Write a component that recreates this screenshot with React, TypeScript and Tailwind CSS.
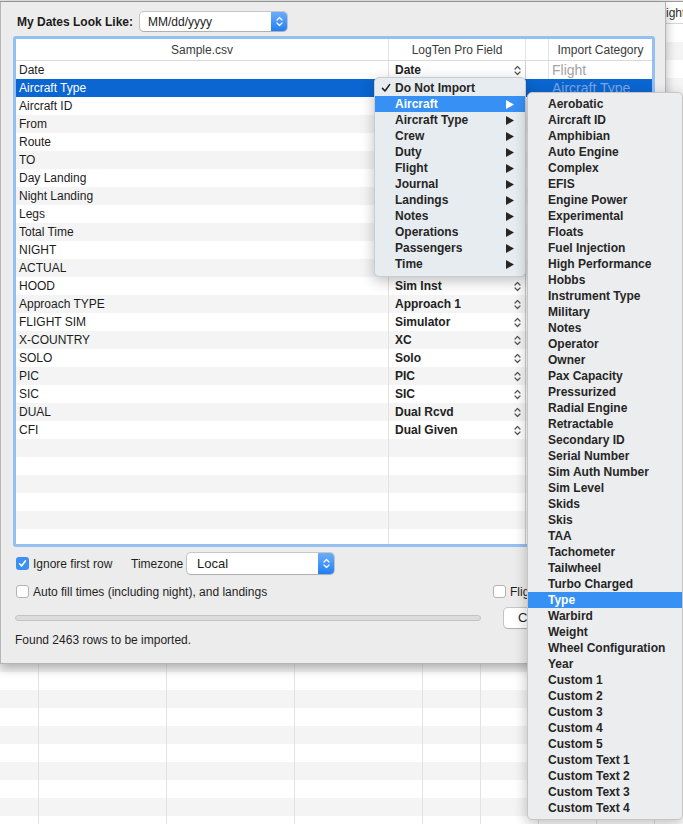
import React from "react";
import clsx from "clsx";

const cn = clsx;

const sourceRows = [
  "Date", "Aircraft Type", "Aircraft ID", "From", "Route", "TO", "Day Landing", "Night Landing", "Legs",
  "Total Time", "NIGHT", "ACTUAL", "HOOD", "Approach TYPE", "FLIGHT SIM", "X-COUNTRY", "SOLO", "PIC", "SIC",
  "DUAL", "CFI",
];

// rows 1-11 sit under the open popup menu, so only the visible values are filled in
const fields = [
  "Date", "", "", "", "", "", "", "", "", "", "", "", "Sim Inst", "Approach 1", "Simulator", "XC", "Solo", "PIC",
  "SIC", "Dual Rcvd", "Dual Given",
];

const categories = ["Flight", "Aircraft Type"];

const menuItems = [
  "Aircraft", "Aircraft Type", "Crew", "Duty", "Flight", "Journal", "Landings", "Notes", "Operations", "Passengers", "Time",
];

const subItems = [
  "Aerobatic", "Aircraft ID", "Amphibian", "Auto Engine", "Complex", "EFIS", "Engine Power", "Experimental", "Floats",
  "Fuel Injection", "High Performance", "Hobbs", "Instrument Type", "Military", "Notes", "Operator", "Owner",
  "Pax Capacity", "Pressurized", "Radial Engine", "Retractable", "Secondary ID", "Serial Number", "Sim Auth Number",
  "Sim Level", "Skids", "Skis", "TAA", "Tachometer", "Tailwheel", "Turbo Charged", "Type", "Warbird", "Weight",
  "Wheel Configuration", "Year", "Custom 1", "Custom 2", "Custom 3", "Custom 4", "Custom 5", "Custom Text 1",
  "Custom Text 2", "Custom Text 3", "Custom Text 4",
];

const UpDown = ({ className }: { className?: string }) => (
  <svg width="7" height="11" viewBox="0 0 7 11" className={className} fill="none" stroke="currentColor" strokeWidth="1.2" strokeLinecap="round" strokeLinejoin="round">
    <path d="M1 4 L3.5 1.5 L6 4" />
    <path d="M1 7 L3.5 9.5 L6 7" />
  </svg>
);

const Arrow = () => (
  <svg width="8" height="9" viewBox="0 0 8 9">
    <polygon points="0,0 8,4.5 0,9" fill="currentColor" />
  </svg>
);

const Checkbox = ({ checked }: { checked?: boolean }) =>
  checked ? (
    <span className="flex h-[13px] w-[13px] shrink-0 items-center justify-center rounded-[3px] bg-[#3b8ff6]">
      <svg width="9" height="9" viewBox="0 0 9 9">
        <path d="M1.6 4.8 L3.6 6.9 L7.4 1.9" stroke="white" strokeWidth="1.6" fill="none" strokeLinecap="round" strokeLinejoin="round" />
      </svg>
    </span>
  ) : (
    <span className="h-[13px] w-[13px] shrink-0 rounded-[3px] border border-[#b3b3b3] bg-white" />
  );

const Popup = ({ value, className, textClass }: { value: string; className?: string; textClass?: string }) => (
  <div className={cn("flex items-stretch rounded-[4px] bg-white shadow-[0_0_0_1px_rgba(0,0,0,0.16),0_1px_1px_rgba(0,0,0,0.12)]", className)}>
    <span className={cn("flex flex-1 items-center text-[#1d1d1d]", textClass)}>{value}</span>
    <span className="flex w-[16px] items-center justify-center rounded-r-[4px] bg-linear-to-b from-[#6aaefa] to-[#1f7ef4] text-white">
      <UpDown />
    </span>
  </div>
);

const App = () => {
  const bgRows = Array.from({ length: 45 });
  const emptyRows = Array.from({ length: 6 });

  return (
    <div className="relative h-[824px] w-[683px] overflow-hidden bg-white font-['Liberation_Sans',Arial,sans-serif] text-[12px]">
      {/* window behind the sheet */}
      <div className="h-[1px] bg-[#e4e4e4]" />
      <div className="h-[1px] bg-[#9c9c9c]" />
      <div className="grid h-[22px] grid-cols-[39px_128px_128px_128px_58px_58px_58px_58px_80px] border-b border-[#d6d6d6] bg-white">
        {["", "", "", "", "", "", "", "", "Flight"].map((h, i) => (
          <div key={i} className="flex items-center border-r border-[#e2e2e2] pl-[1px] text-[#333]">
            {h}
          </div>
        ))}
      </div>
      {bgRows.map((_, r) => (
        <div
          key={r}
          className={cn(
            "grid h-[18px] grid-cols-[39px_128px_128px_128px_58px_58px_58px_58px_80px]",
            r % 2 === 1 ? "bg-[#f4f4f4]" : "bg-white"
          )}
        >
          {Array.from({ length: 9 }).map((_, c) => (
            <div key={c} className="border-r border-[#e2e2e2]" />
          ))}
        </div>
      ))}

      {/* import sheet */}
      <div className="absolute left-0 top-[2px] flex h-[662px] w-[666px] flex-col border-x border-b border-[#b5b5b5] bg-[#ececec] shadow-[0_4px_10px_rgba(0,0,0,0.3)]">
        <div className="mt-[10px] flex h-[19px] items-center pl-[16px]">
          <span className="w-[123px] font-bold text-[#1b1b1b]">My Dates Look Like:</span>
          <Popup value="MM/dd/yyyy" className="h-[19px] w-[147px]" textClass="pl-[8px]" />
        </div>

        <div className="ml-[12px] mt-[5px] h-[511px] w-[642px] overflow-hidden rounded-[3px] border-[3px] border-[#93bff1] bg-white">
          <div className="grid h-[22px] grid-cols-[373px_137px_23px_103px] border-b border-[#dadada] text-[#3a3a3a]">
            <div className="flex items-center justify-center border-r border-[#e3e3e3]">Sample.csv</div>
            <div className="flex items-center justify-center border-r border-[#e3e3e3]">LogTen Pro Field</div>
            <div className="border-r border-[#e3e3e3]" />
            <div className="flex items-center justify-center">Import Category</div>
          </div>
          <div className="h-[483px] overflow-hidden">
            {sourceRows.map((name, r) => {
              const selected = r === 1;
              return (
                <div
                  key={name}
                  className={cn(
                    "grid h-[18px] grid-cols-[373px_137px_23px_103px] leading-[17px]",
                    selected ? "bg-[#0b66d1]" : r % 2 === 1 ? "bg-[#f4f4f4]" : "bg-white"
                  )}
                >
                  <div className={cn("flex items-center border-r pl-[3px]", selected ? "border-[#0b66d1] text-white" : "border-[#e3e3e3] text-[#1c1c1c]")}>
                    {name}
                  </div>
                  <div className={cn("flex items-center border-r pl-[6px] pr-[4px] font-bold", selected ? "border-[#0b66d1] text-white" : "border-[#d0d0d0] text-[#222]")}>
                    <span className="flex-1">{fields[r]}</span>
                    {fields[r] && <UpDown className="text-[#555]" />}
                  </div>
                  <div className={cn("border-r", selected ? "border-[#0b66d1]" : "border-[#e3e3e3]")} />
                  <div className={cn("flex items-center pl-[3px] text-[14px]", selected ? "text-[#7aa7e3]" : "text-[#a3a3a3]")}>
                    {categories[r] ?? ""}
                  </div>
                </div>
              );
            })}
            {emptyRows.map((_, i) => (
              <div
                key={i}
                className={cn("grid h-[18px] grid-cols-[373px_137px_23px_103px]", i % 2 === 0 ? "bg-[#f4f4f4]" : "bg-white")}
              >
                <div className="border-r border-[#e3e3e3]" />
                <div className="border-r border-[#d0d0d0]" />
                <div className="border-r border-[#e3e3e3]" />
                <div />
              </div>
            ))}
          </div>
        </div>

        <div className="mt-[6px] flex h-[21px] items-center pl-[15px] text-[#1f1f1f]">
          <Checkbox checked />
          <span className="ml-[4px] w-[98px]">Ignore first row</span>
          <span className="w-[56px]">Timezone</span>
          <Popup value="Local" className="h-[21px] w-[147px]" textClass="pl-[10px] text-[13px]" />
        </div>

        <div className="mt-[11px] flex h-[13px] items-center pl-[15px] text-[#1f1f1f]">
          <div className="flex w-[477px] items-center">
            <Checkbox />
            <span className="ml-[4px]">Auto fill times (including night), and landings</span>
          </div>
          <Checkbox />
          <span className="ml-[4px]">Flig</span>
        </div>

        <div className="mt-[10px] flex h-[20px] items-center pl-[14px]">
          <div className="h-[6px] w-[466px] rounded-full border border-[#c4c4c4] bg-[#dcdcdc]" />
          <div className="ml-[23px] flex h-[20px] w-[60px] items-center rounded-[4px] bg-white pl-[14px] text-[13px] text-[#1f1f1f] shadow-[0_0_0_1px_rgba(0,0,0,0.16),0_1px_1px_rgba(0,0,0,0.12)]">
            C
          </div>
        </div>

        <div className="mt-[5px] flex h-[14px] items-center pl-[14px] text-[#1f1f1f]">Found 2463 rows to be imported.</div>
      </div>

      {/* field menu */}
      <div className="absolute left-[374px] top-[77px] w-[152px] rounded-[5px] border border-[#c8cdd1] bg-[#e6ecef] pb-[4px] pt-[2px] font-bold text-[#262626] shadow-[0_4px_14px_rgba(0,0,0,0.25)]">
        <div className="flex h-[16px] items-center pl-[6px]">
          <span className="w-[14px]">
            <svg width="10" height="10" viewBox="0 0 10 10">
              <path d="M1.5 5.4 L4 8 L8.6 1.6" stroke="#222" strokeWidth="1.6" fill="none" strokeLinecap="round" strokeLinejoin="round" />
            </svg>
          </span>
          <span>Do Not Import</span>
        </div>
        {menuItems.map((item, i) => (
          <div
            key={item}
            className={cn("flex h-[16px] items-center pl-[20px] pr-[11px]", i === 0 ? "bg-[#3790f4] text-white" : "text-[#262626]")}
          >
            <span className="flex-1">{item}</span>
            <Arrow />
          </div>
        ))}
      </div>

      {/* aircraft submenu */}
      <div className="absolute left-[527px] top-[92px] w-[156px] rounded-[5px] border border-[#c6c6c6] bg-[#ecedee] py-[3px] font-bold text-[#262626] shadow-[0_4px_14px_rgba(0,0,0,0.25)]">
        {subItems.map((item) => (
          <div
            key={item}
            className={cn("flex h-[16px] items-center pl-[20px]", item === "Type" ? "bg-[#3790f4] text-white" : "")}
          >
            {item}
          </div>
        ))}
      </div>
    </div>
  );
};

export default App;
